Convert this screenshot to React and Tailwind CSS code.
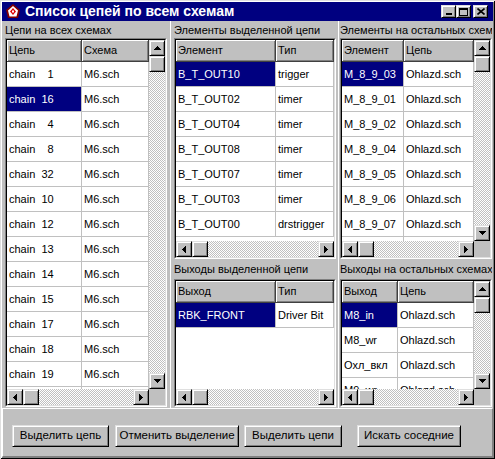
const raised =
  'bg-[#c0c0c0] border border-t-[#dfdfdf] border-l-[#dfdfdf] border-r-black border-b-black shadow-[inset_1px_1px_#fff,inset_-1px_-1px_#808080]';
const dither =
  'bg-[repeating-conic-gradient(#c0c0c0_0%_25%,#ffffff_0%_50%)] bg-size-[2px_2px]';

const Arrow = ({ dir }) => {
  const vert = dir === 'up' || dir === 'down';
  const w = vert ? 7 : 4;
  const h = vert ? 4 : 7;
  const pts = {
    up: '0,4 7,4 3.5,0',
    down: '0,0 7,0 3.5,4',
    left: '4,0 4,7 0,3.5',
    right: '0,0 0,7 4,3.5',
  };
  return (
    <svg width={w} height={h} viewBox={`0 0 ${w} ${h}`} shapeRendering="crispEdges">
      <polygon points={pts[dir]} fill="#000" />
    </svg>
  );
};

const ScrollBtn = ({ dir }) => (
  <div className={`w-[16px] h-[16px] shrink-0 flex items-center justify-center ${raised}`}>
    <Arrow dir={dir} />
  </div>
);

const VScroll = () => (
  <div className="w-[16px] shrink-0 flex flex-col">
    <ScrollBtn dir="up" />
    <div className={`h-[16px] shrink-0 ${raised}`} />
    <div className={`flex-1 ${dither}`} />
    <ScrollBtn dir="down" />
  </div>
);

const HScroll = () => (
  <div className="flex-1 flex h-[16px]">
    <ScrollBtn dir="left" />
    <div className={`w-[16px] shrink-0 ${raised}`} />
    <div className={`flex-1 ${dither}`} />
    <ScrollBtn dir="right" />
  </div>
);

// sunken string grid, Delphi style
const Grid = ({ height, cols, rows, sel, vscroll }) => (
  <div className={`${height} shrink-0 border border-t-[#808080] border-l-[#808080] border-r-white border-b-white`}>
    <div className="h-full flex flex-col border border-t-black border-l-black border-r-[#dfdfdf] border-b-[#dfdfdf] bg-white">
      <div className="flex-1 min-h-0 flex">
        <div className="flex-1 min-w-0 overflow-hidden flex flex-col">
          <div className="flex h-[22px] shrink-0">
            {cols.map((c, i) => (
              <div
                key={i}
                className={`${c.w} flex items-center px-[2px] bg-[#c0c0c0] border-r border-b border-[#404040] shadow-[inset_1px_1px_#fff,inset_-1px_-1px_#808080] whitespace-nowrap overflow-hidden`}
              >
                {c.title}
              </div>
            ))}
          </div>
          {rows.map((r, ri) => (
            <div key={ri} className="flex h-[25px] shrink-0">
              {r.map((cell, ci) => (
                <div
                  key={ci}
                  className={`${cols[ci].w} flex items-center px-[2px] border-r border-b border-[#c0c0c0] whitespace-pre overflow-hidden ${
                    ri === sel && ci === 0 ? 'bg-[#000080] text-white' : ''
                  }`}
                >
                  {cell}
                </div>
              ))}
            </div>
          ))}
        </div>
        {vscroll && <VScroll />}
      </div>
      <div className="flex h-[16px] shrink-0">
        <HScroll />
        {vscroll && <div className="w-[16px] shrink-0 bg-[#c0c0c0]" />}
      </div>
    </div>
  </div>
);

const Btn = ({ w, ml, children }) => (
  <div className={`${w} ${ml} h-[22px] flex items-center justify-center text-[11.5px] ${raised}`}>{children}</div>
);

const chains = [
  ['chain    1', 'M6.sch'],
  ['chain  16', 'M6.sch'],
  ['chain    4', 'M6.sch'],
  ['chain    8', 'M6.sch'],
  ['chain  32', 'M6.sch'],
  ['chain  10', 'M6.sch'],
  ['chain  12', 'M6.sch'],
  ['chain  13', 'M6.sch'],
  ['chain  14', 'M6.sch'],
  ['chain  15', 'M6.sch'],
  ['chain  17', 'M6.sch'],
  ['chain  18', 'M6.sch'],
  ['chain  19', 'M6.sch'],
  ['chain  20', 'M6.sch'],
];

const elements = [
  ['B_T_OUT10', 'trigger'],
  ['B_T_OUT02', 'timer'],
  ['B_T_OUT04', 'timer'],
  ['B_T_OUT08', 'timer'],
  ['B_T_OUT07', 'timer'],
  ['B_T_OUT03', 'timer'],
  ['B_T_OUT00', 'drstrigger'],
];

const otherElements = [
  ['M_8_9_03', 'Ohlazd.sch'],
  ['M_8_9_01', 'Ohlazd.sch'],
  ['M_8_9_02', 'Ohlazd.sch'],
  ['M_8_9_04', 'Ohlazd.sch'],
  ['M_8_9_05', 'Ohlazd.sch'],
  ['M_8_9_06', 'Ohlazd.sch'],
  ['M_8_9_07', 'Ohlazd.sch'],
  ['SP01', 'main2.sch'],
];

const otherOutputs = [
  ['M8_in', 'Ohlazd.sch'],
  ['M8_wr', 'Ohlazd.sch'],
  ['Охл_вкл', 'Ohlazd.sch'],
  ['M9_wr', 'Ohlazd.sch'],
];

export default function App() {
  return (
    <div className="w-[495px] h-[459px] p-[2px] bg-[#c0c0c0] text-black text-[11px] font-['Liberation_Sans',Arial,sans-serif] shadow-[inset_1px_1px_#dfdfdf,inset_-1px_-1px_#000,inset_2px_2px_#fff,inset_-2px_-2px_#808080] flex flex-col overflow-hidden">
      {/* title bar */}
      <div className="h-[19px] shrink-0 bg-[#000080] flex items-center pl-[4px] pr-[5px]">
        <svg width="14" height="15" viewBox="0 0 14 15" className="shrink-0">
          <polygon points="7,0 14,6 12,14 2,14 0,6" fill="#800000" />
          <polygon points="7,2 12,6.5 10.5,12.5 3.5,12.5 2,6.5" fill="#fff" />
          <polygon points="7,4 10,7.5 7,11 4,7.5" fill="#e00000" />
          <rect x="6" y="6.5" width="2" height="2" fill="#fff" />
        </svg>
        <span className="ml-[5px] text-white font-bold text-[14px] whitespace-nowrap">Список цепей по всем схемам</span>
        <div className="ml-auto flex items-center">
          <div className={`w-[15px] h-[13px] flex items-end justify-center pb-[2px] ${raised}`}>
            <div className="w-[6px] h-[2px] bg-black" />
          </div>
          <div className={`w-[15px] h-[13px] flex items-center justify-center ${raised}`}>
            <div className="w-[9px] h-[8px] border border-black border-t-2" />
          </div>
          <div className={`ml-[2px] w-[15px] h-[13px] flex items-center justify-center ${raised}`}>
            <svg width="8" height="7" viewBox="0 0 8 7">
              <path d="M0.5 0.5 L7.5 6.5 M7.5 0.5 L0.5 6.5" stroke="#000" strokeWidth="1.6" />
            </svg>
          </div>
        </div>
      </div>

      {/* panels */}
      <div className="h-[387px] shrink-0 flex">
        <div className="w-[165px] shrink-0 pl-[3px] flex flex-col">
          <div className="h-[17px] leading-[18px] whitespace-nowrap">Цепи на всех схемах</div>
          <Grid
            height="h-[369px]"
            cols={[
              { title: 'Цепь', w: 'w-[75px] shrink-0' },
              { title: 'Схема', w: 'flex-1 min-w-0' },
            ]}
            rows={chains}
            sel={1}
            vscroll
          />
        </div>
        <div className="w-[7px] shrink-0 flex justify-center">
          <div className="w-px bg-white" />
        </div>
        <div className="w-[162px] shrink-0 flex flex-col">
          <div className="h-[17px] leading-[18px] whitespace-nowrap">Элементы выделенной цепи</div>
          <Grid
            height="h-[221px]"
            cols={[
              { title: 'Элемент', w: 'w-[100px] shrink-0' },
              { title: 'Тип', w: 'flex-1 min-w-0' },
            ]}
            rows={elements}
            sel={0}
          />
          <div className="h-[20px] leading-[20px] whitespace-nowrap">Выходы выделенной цепи</div>
          <Grid
            height="h-[128px]"
            cols={[
              { title: 'Выход', w: 'w-[100px] shrink-0' },
              { title: 'Тип', w: 'flex-1 min-w-0' },
            ]}
            rows={[['RBK_FRONT', 'Driver Bit']]}
            sel={0}
          />
        </div>
        <div className="w-[4px] shrink-0 flex justify-center">
          <div className="w-px bg-white" />
        </div>
        <div className="w-[152px] shrink-0 flex flex-col">
          <div className="h-[17px] leading-[18px] whitespace-nowrap overflow-hidden">Элементы на остальных схемах</div>
          <Grid
            height="h-[221px]"
            cols={[
              { title: 'Элемент', w: 'w-[62px] shrink-0' },
              { title: 'Цепь', w: 'flex-1 min-w-0' },
            ]}
            rows={otherElements}
            sel={0}
            vscroll
          />
          <div className="h-[20px] leading-[20px] whitespace-nowrap overflow-hidden">Выходы на остальных схемах</div>
          <Grid
            height="h-[128px]"
            cols={[
              { title: 'Выход', w: 'w-[56px] shrink-0' },
              { title: 'Цепь', w: 'flex-1 min-w-0' },
            ]}
            rows={otherOutputs}
            sel={0}
            vscroll
          />
        </div>
      </div>

      {/* buttons */}
      <div className="h-[49px] shrink-0 border border-t-white border-l-white border-r-[#808080] border-b-[#808080] flex items-start pt-[16px]">
        <Btn w="w-[97px]" ml="ml-[9px]">Выделить цепь</Btn>
        <Btn w="w-[124px]" ml="ml-[6px]">Отменить выделение</Btn>
        <Btn w="w-[98px]" ml="ml-[5px]">Выделить цепи</Btn>
        <Btn w="w-[104px]" ml="ml-[15px]">Искать соседние</Btn>
      </div>
    </div>
  );
}
